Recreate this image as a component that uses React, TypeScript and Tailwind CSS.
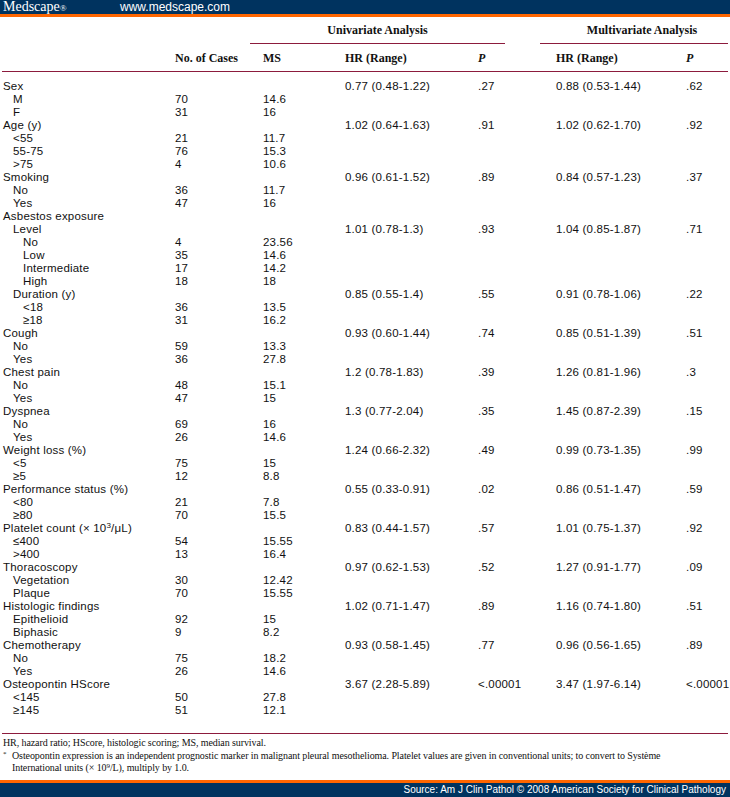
import React from 'react';

type Row = [React.ReactNode, number, string, string, string, string, string, string];

// label, indent level, cases, MS, uni HR, uni P, multi HR, multi P
const ROWS: Row[] = [
  ['Sex', 0, '', '', '0.77 (0.48-1.22)', '.27', '0.88 (0.53-1.44)', '.62'],
  ['M', 1, '70', '14.6', '', '', '', ''],
  ['F', 1, '31', '16', '', '', '', ''],
  ['Age (y)', 0, '', '', '1.02 (0.64-1.63)', '.91', '1.02 (0.62-1.70)', '.92'],
  ['<55', 1, '21', '11.7', '', '', '', ''],
  ['55-75', 1, '76', '15.3', '', '', '', ''],
  ['>75', 1, '4', '10.6', '', '', '', ''],
  ['Smoking', 0, '', '', '0.96 (0.61-1.52)', '.89', '0.84 (0.57-1.23)', '.37'],
  ['No', 1, '36', '11.7', '', '', '', ''],
  ['Yes', 1, '47', '16', '', '', '', ''],
  ['Asbestos exposure', 0, '', '', '', '', '', ''],
  ['Level', 1, '', '', '1.01 (0.78-1.3)', '.93', '1.04 (0.85-1.87)', '.71'],
  ['No', 2, '4', '23.56', '', '', '', ''],
  ['Low', 2, '35', '14.6', '', '', '', ''],
  ['Intermediate', 2, '17', '14.2', '', '', '', ''],
  ['High', 2, '18', '18', '', '', '', ''],
  ['Duration (y)', 1, '', '', '0.85 (0.55-1.4)', '.55', '0.91 (0.78-1.06)', '.22'],
  ['<18', 2, '36', '13.5', '', '', '', ''],
  ['≥18', 2, '31', '16.2', '', '', '', ''],
  ['Cough', 0, '', '', '0.93 (0.60-1.44)', '.74', '0.85 (0.51-1.39)', '.51'],
  ['No', 1, '59', '13.3', '', '', '', ''],
  ['Yes', 1, '36', '27.8', '', '', '', ''],
  ['Chest pain', 0, '', '', '1.2 (0.78-1.83)', '.39', '1.26 (0.81-1.96)', '.3'],
  ['No', 1, '48', '15.1', '', '', '', ''],
  ['Yes', 1, '47', '15', '', '', '', ''],
  ['Dyspnea', 0, '', '', '1.3 (0.77-2.04)', '.35', '1.45 (0.87-2.39)', '.15'],
  ['No', 1, '69', '16', '', '', '', ''],
  ['Yes', 1, '26', '14.6', '', '', '', ''],
  ['Weight loss (%)', 0, '', '', '1.24 (0.66-2.32)', '.49', '0.99 (0.73-1.35)', '.99'],
  ['<5', 1, '75', '15', '', '', '', ''],
  ['≥5', 1, '12', '8.8', '', '', '', ''],
  ['Performance status (%)', 0, '', '', '0.55 (0.33-0.91)', '.02', '0.86 (0.51-1.47)', '.59'],
  ['<80', 1, '21', '7.8', '', '', '', ''],
  ['≥80', 1, '70', '15.5', '', '', '', ''],
  [<>Platelet count (× 10<sup className="text-[8px]">3</sup>/μL)</>, 0, '', '', '0.83 (0.44-1.57)', '.57', '1.01 (0.75-1.37)', '.92'],
  ['≤400', 1, '54', '15.55', '', '', '', ''],
  ['>400', 1, '13', '16.4', '', '', '', ''],
  ['Thoracoscopy', 0, '', '', '0.97 (0.62-1.53)', '.52', '1.27 (0.91-1.77)', '.09'],
  ['Vegetation', 1, '30', '12.42', '', '', '', ''],
  ['Plaque', 1, '70', '15.55', '', '', '', ''],
  ['Histologic findings', 0, '', '', '1.02 (0.71-1.47)', '.89', '1.16 (0.74-1.80)', '.51'],
  ['Epithelioid', 1, '92', '15', '', '', '', ''],
  ['Biphasic', 1, '9', '8.2', '', '', '', ''],
  ['Chemotherapy', 0, '', '', '0.93 (0.58-1.45)', '.77', '0.96 (0.56-1.65)', '.89'],
  ['No', 1, '75', '18.2', '', '', '', ''],
  ['Yes', 1, '26', '14.6', '', '', '', ''],
  ['Osteopontin HScore', 0, '', '', '3.67 (2.28-5.89)', '<.00001', '3.47 (1.97-6.14)', '<.00001'],
  ['<145', 1, '50', '27.8', '', '', '', ''],
  ['≥145', 1, '51', '12.1', '', '', '', ''],
];

const COLS = 'grid grid-cols-[173px_88px_82px_133px_78px_130px_1fr]';
const indentClass = ['pl-[1px]', 'pl-[11px]', 'pl-[21px]'];

const App: React.FC = () => {
  return (
    <div className="w-[730px] h-[797px] bg-white flex flex-col overflow-hidden text-[#111]">
      {/* Top bar */}
      <div className="h-[14px] shrink-0 bg-[#00335f] flex items-center text-white">
        <span className="pl-[3px] w-[120px] font-['Liberation_Serif',serif] text-[14px] leading-[14px]">
          Medscape<span className="text-[9px]">®</span>
        </span>
        <span className="font-['Liberation_Sans',sans-serif] text-[12px] leading-[14px]">www.medscape.com</span>
      </div>
      <div className="h-[3px] shrink-0 bg-[#ff6600]" />

      {/* Table */}
      <div className="shrink-0 mx-[2px] font-['Liberation_Sans',Arial,sans-serif] text-[11.5px] tracking-[0.2px]">
        {/* Group header */}
        <div className="flex h-[27px] font-['Liberation_Serif',serif] font-bold text-[12px] tracking-normal">
          <div className="w-[248px]" />
          <div className="w-[255px] border-b border-[#8c1b3d] flex items-center justify-center">Univariate Analysis</div>
          <div className="w-[35px]" />
          <div className="w-[188px] border-b border-[#8c1b3d] flex items-center justify-center pl-[16px]">Multivariate Analysis</div>
        </div>
        {/* Column header */}
        <div className={`${COLS} h-[28px] items-center border-b border-[#8c1b3d] font-['Liberation_Serif',serif] font-bold text-[12px] tracking-normal`}>
          <div />
          <div>No. of Cases</div>
          <div>MS</div>
          <div>HR (Range)</div>
          <div className="italic">P</div>
          <div>HR (Range)</div>
          <div className="italic">P</div>
        </div>
        {/* Body */}
        <div className="pt-[8px] pb-[16px] border-b border-[#8c1b3d]">
          {ROWS.map((r, i) => (
            <div key={i} className={`${COLS} h-[13px] leading-[13px] whitespace-nowrap`}>
              <div className={indentClass[r[1]]}>{r[0]}</div>
              <div>{r[2]}</div>
              <div>{r[3]}</div>
              <div>{r[4]}</div>
              <div>{r[5]}</div>
              <div>{r[6]}</div>
              <div>{r[7]}</div>
            </div>
          ))}
        </div>
      </div>

      {/* Footnotes */}
      <div className="flex-1 min-h-0 pt-[3px] px-[3px] font-['Liberation_Serif',serif] text-[10px] tracking-[-0.1px] leading-[12.5px]">
        <div>HR, hazard ratio; HScore, histologic scoring; MS, median survival.</div>
        <div className="flex">
          <span className="w-[8px] text-[7px] leading-[9px]">*</span>
          <div className="pl-[1px] whitespace-nowrap">
            Osteopontin expression is an independent prognostic marker in malignant pleural mesothelioma. Platelet values are given in conventional units; to convert to Système
            <br />
            International units (× 10<sup className="text-[7px]">9</sup>/L), multiply by 1.0.
          </div>
        </div>
      </div>

      {/* Bottom bar */}
      <div className="h-[3px] shrink-0 bg-[#ff6600]" />
      <div className="h-[14px] shrink-0 bg-[#00335f] flex items-center justify-end pr-[4px] text-white font-['Liberation_Sans',sans-serif] text-[10px] leading-[14px]">
        Source: Am J Clin Pathol © 2008 American Society for Clinical Pathology
      </div>
    </div>
  );
};

export default App;
